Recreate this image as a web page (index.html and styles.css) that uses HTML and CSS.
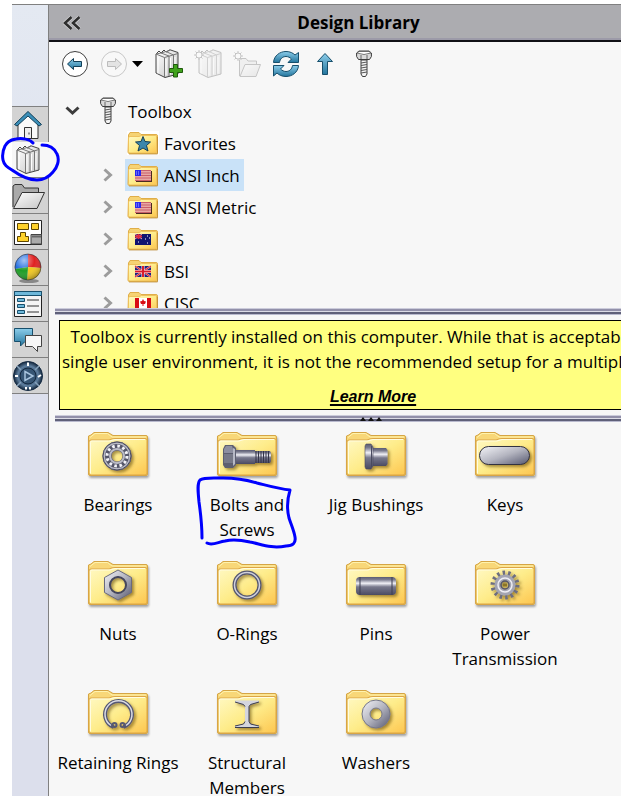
FILE: index.html
```html
<!DOCTYPE html>
<html lang="en">
<head>
    <meta charset="UTF-8">
    <meta name="viewport" content="width=device-width, initial-scale=1.0">
    <title>Design Library</title>
    <link rel="stylesheet" href="styles.css">
</head>
<body>
    <!-- shared shapes and gradients -->
    <svg class="sprite" width="0" height="0" aria-hidden="true">
        <defs>
            <linearGradient id="gold" x1="0" y1="0" x2="1" y2="1">
                <stop offset="0" stop-color="#fff9c4"/>
                <stop offset="0.5" stop-color="#feec8a"/>
                <stop offset="1" stop-color="#fdc650"/>
            </linearGradient>
            <linearGradient id="steel" x1="0" y1="0" x2="0" y2="1">
                <stop offset="0" stop-color="#5b5c72"/>
                <stop offset="0.15" stop-color="#7c7d90"/>
                <stop offset="0.35" stop-color="#f0f0f6"/>
                <stop offset="0.55" stop-color="#77788c"/>
                <stop offset="1" stop-color="#4a4b62"/>
            </linearGradient>
            <linearGradient id="metal" x1="0" y1="0" x2="1" y2="1">
                <stop offset="0" stop-color="#f4f4f8"/>
                <stop offset="0.5" stop-color="#b4b5c0"/>
                <stop offset="1" stop-color="#55576f"/>
            </linearGradient>
            <linearGradient id="blue" x1="0" y1="0" x2="0" y2="1">
                <stop offset="0" stop-color="#8ccdea"/>
                <stop offset="1" stop-color="#23759d"/>
            </linearGradient>
            <linearGradient id="paper" x1="0" y1="0" x2="1" y2="1">
                <stop offset="0" stop-color="#ffffff"/>
                <stop offset="1" stop-color="#c4c4c4"/>
            </linearGradient>
            <radialGradient id="disc">
                <stop offset="0.4" stop-color="#2b4764"/>
                <stop offset="0.7" stop-color="#5f7f9f"/>
                <stop offset="1" stop-color="#12263c"/>
            </radialGradient>
            <radialGradient id="shine" cx="0.35" cy="0.25" r="0.8">
                <stop offset="0" stop-color="#fff" stop-opacity="0.6"/>
                <stop offset="0.5" stop-color="#fff" stop-opacity="0"/>
                <stop offset="1" stop-color="#000" stop-opacity="0.35"/>
            </radialGradient>
            <filter id="drop" x="-20%" y="-20%" width="150%" height="150%">
                <feDropShadow dx="2" dy="2" stdDeviation="1.5" flood-color="#5a3c00" flood-opacity="0.55"/>
            </filter>
            <filter id="soft" x="-10%" y="-10%" width="125%" height="130%">
                <feDropShadow dx="1" dy="2" stdDeviation="1" flood-color="#000" flood-opacity="0.35"/>
            </filter>
        </defs>
        <symbol id="folder" viewBox="0 0 66 52">
            <g filter="url(#soft)">
                <path d="M3.500 9L3.500 6L6 5L9 2.500H23L28 5.500H61Q62.500 5.500 62.500 7V44Q62.500 45.500 61 45.500H5Q3.500 45.500 3.500 44Z" fill="#f8d778" stroke="#d5a544"/>
                <path d="M5 7.500L10 3.500H22.500L27 7H61" fill="none" stroke="#fff3ae"/>
                <path d="M4 12Q4 10 6 10H24Q27 8.500 30 8.500H60Q62 8.500 62 10V43Q62 45 60 45H6Q4 45 4 43Z" fill="url(#gold)" stroke="#dca544"/>
                <path d="M5.500 43.500V12.500Q5.500 11 7 11H25L30 9.500H60" fill="none" stroke="#fffce0"/>
            </g>
        </symbol>
        <symbol id="mini-folder" viewBox="0 0 32 24">
            <path d="M1.500 4L3 1.500H12L14 3.500H29Q30.500 3.500 30.500 5V21Q30.500 22.500 29 22.500H2.500Q1 22.500 1 21Z" fill="#f6d373" stroke="#e0ae48"/>
            <path d="M1.500 7Q1.500 5.500 3 5.500H12L14.500 4.500H28.500Q29.500 4.500 29.500 6V20.500Q29.500 22 28 22H3Q1.500 22 1.500 20.500Z" fill="url(#gold)" stroke="#eec15c"/>
            <path d="M2 23H30.500V6" fill="none" stroke="#b98830" stroke-opacity="0.7"/>
        </symbol>
        <symbol id="us-flag" viewBox="0 0 17 12">
            <path d="M1 1H17V12H1Z" fill="#4a2a20"/>
            <path d="M0 0H16V11H0Z" fill="#e8a8a4"/>
            <path d="M0 .5H16M0 3H16M0 5.500H16M0 8H16M0 10.500H16" stroke="#c8606a" stroke-width="1.200"/>
            <path d="M0 0H6V6H0Z" fill="#2a2af0"/>
            <path d="M1 2H5M1 4H5" stroke="#a5b0ff" stroke-dasharray="1 1"/>
        </symbol>
        <symbol id="bolt" viewBox="0 0 16 28">
            <path d="M5 10V24L6.500 26.500H9.500L11 24V10Z" fill="#f4f4f4" stroke="#3c3c3c"/>
            <path d="M5 13L11 12M5 15.500L11 14.500M5 18L11 17M5 20.500L11 19.500M5 23L11 22" stroke="#555"/>
            <path d="M.6 3V6.500L2.500 9.500H13.500L15.400 6.500V3L13 1H3Z" fill="#d9d9d9" stroke="#3c3c3c"/>
            <path d="M1 3Q8 6 15 3L13 1.500H3Z" fill="#fff" stroke="#555" stroke-width=".8"/>
            <path d="M5 5V9M11 5V9" stroke="#666"/>
        </symbol>
        <symbol id="books" viewBox="0 0 24 29">
            <path d="M1 5L4 2L6 4L9 1L11 3L15 0.800L23 3.500V25L10 28.500L1 24Z" fill="url(#paper)" stroke="#444"/>
            <path d="M1 5L9.500 8.500L23 4.500M9.500 8.500V28M14 7V27M18.500 6V26M1 5L6 4L14 7M6 4L11 2.500L18.500 6M11 3L15 1" fill="none" stroke="#777"/>
            <path d="M3 8V24.500M11 10V26.500M15.500 9V25.500M20 8V24.500" stroke="#fff"/>
        </symbol>
        <symbol id="chevron" viewBox="0 0 10 14">
            <path d="M1.500 1.500L7.500 7L1.500 12.500" fill="none" stroke="#9c9c9c" stroke-width="3"/>
        </symbol>
    </svg>

    <div class="app">
        <nav class="sidebar" aria-label="Task pane">
            <button class="tab" aria-label="Home">
                <svg width="32" height="32" viewBox="0 0 32 32">
                    <path d="M6 14L16 5L26 14V29.500H6Z" fill="#fafafa" stroke="#333"/>
                    <path d="M2.500 15.500L16 2.500L29.500 15.500L27 17L16 7L5 17Z" fill="#3b8fb8" stroke="#123f58"/>
                    <path d="M12.500 29V18.500H19.500V29" fill="#eee" stroke="#333"/>
                    <path d="M17 23.500V25.500" stroke="#333"/>
                </svg>
            </button>
            <button class="tab active" aria-label="Design Library">
                <svg width="24" height="29"><use href="#books"/></svg>
                <svg class="pen pen-tab" viewBox="0 0 62 46">
                    <path d="M33 6C30 2 22 1 16 2C9 3 7 6 5 9C3 13 2 18 3 23C4 28 7 30 12 33C19 38 29 43 37 43C43 43 48 41 53 35C57 31 60 23 57 17C54 10 49 8 42 8"/>
                </svg>
            </button>
            <button class="tab" aria-label="File Explorer">
                <svg width="34" height="32" viewBox="0 0 34 32">
                    <path d="M1 27V6L3 4.500H10L12.500 8H26.500V12" fill="#aaa" stroke="#333"/>
                    <path d="M1.500 28.500L10 12.500H32.500L25 28.500Z" fill="url(#paper)" stroke="#333"/>
                </svg>
            </button>
            <button class="tab" aria-label="View Palette">
                <svg width="32" height="32" viewBox="0 0 32 32">
                    <path d="M2.500 4.500H29.500V28.500H2.500Z" fill="#fff" stroke="#222"/>
                    <path d="M5.500 7.500H16.500V13.500H5.500ZM19.500 7.500H26.500V13.500H19.500ZM8.500 16.500H13.500V20.500H16.500V25.500H5.500V20.500H8.500Z" fill="#ffd22b" stroke="#5f4700"/>
                    <path d="M19 28V18.500H29.500V28Z" fill="#aaa" stroke="#444"/>
                    <path d="M20 19.500H29V21.500H20Z" fill="#666"/>
                </svg>
            </button>
            <button class="tab" aria-label="Appearances">
                <svg width="32" height="32" viewBox="0 0 32 32">
                    <ellipse cx="17" cy="29" rx="10" ry="2" fill="#888"/>
                    <path d="M16 15V2A13 13 0 0 0 3 17Z" fill="#1f6be0"/>
                    <path d="M16 15V2A13 13 0 0 1 29 16Z" fill="#e02222"/>
                    <path d="M16 15L29 16A13 13 0 0 1 15 28Z" fill="#f2c81e"/>
                    <path d="M16 15L3 17A13 13 0 0 0 15 28Z" fill="#1f9e26"/>
                    <circle cx="16" cy="15" r="13" fill="url(#shine)" stroke="#333" stroke-width=".6"/>
                </svg>
            </button>
            <button class="tab" aria-label="Custom Properties">
                <svg width="32" height="32" viewBox="0 0 32 32">
                    <path d="M2.500 3.500H29.500V28.500H2.500Z" fill="#f5f5f5" stroke="#222"/>
                    <path d="M2.500 3.500H29.500V7.500H2.500Z" fill="#6eb8da" stroke="#174f6c"/>
                    <path d="M5.500 10.500H12.500V13.500H5.500ZM5.500 16.500H12.500V19.500H5.500ZM5.500 22.500H12.500V25.500H5.500Z" fill="#6eb8da" stroke="#174f6c"/>
                    <path d="M15 12H27M15 18H27M15 24H27" stroke="#333"/>
                </svg>
            </button>
            <button class="tab" aria-label="Forum">
                <svg width="32" height="32" viewBox="0 0 32 32">
                    <path d="M2.500 4.500H20.500V17.500H13L8.500 22V17.500H2.500Z" fill="url(#blue)" stroke="#174f6c"/>
                    <path d="M13.500 11.500H29.500V22.500H25.500V27.500L20.500 22.500H13.500Z" fill="#f7f7f7" stroke="#444"/>
                </svg>
            </button>
            <button class="tab" aria-label="Recovery">
                <svg width="32" height="32" viewBox="0 0 32 32">
                    <circle cx="16" cy="16" r="14.500" fill="url(#disc)" stroke="#172c44"/>
                    <path d="M5 6L9 10M27 6L23 10M5 26L9 22M27 26L23 22" stroke="#86a2bc" stroke-width="1.500"/>
                    <circle cx="16" cy="16" r="8" fill="#365574" stroke="#142940"/>
                    <path d="M13 11.500L21 16L13 20.500Z" fill="none" stroke="#a8c4de" stroke-width="1.500"/>
                    <path d="M16 2.500V6M3 16H6M26 17L29 15M14 27V29.500M18 27V29.500" stroke="#fff" stroke-width="2"/>
                </svg>
            </button>
        </nav>

        <main class="panel">
            <header class="title-bar">
                <button class="collapse" aria-label="Collapse">
                    <svg width="18" height="14" viewBox="0 0 18 14">
                        <path d="M8.500 1L2 7L8.500 13M16.500 1L10 7L16.500 13" fill="none" stroke="#fff" stroke-opacity=".5" stroke-width="4"/>
                        <path d="M8.500 1L2 7L8.500 13M16.500 1L10 7L16.500 13" fill="none" stroke="#2e2e2e" stroke-width="2.600"/>
                    </svg>
                </button>
                <h1>Design Library</h1>
            </header>

            <div class="toolbar">
                <button aria-label="Back">
                    <svg width="28" height="28" viewBox="0 0 28 28">
                        <circle cx="14" cy="14" r="12.500" fill="#fff" stroke="#3f3f3f"/>
                        <path d="M6.500 14L12.500 8.500V11.500H20.500V16.500H12.500V19.500Z" fill="url(#blue)" stroke="#123f58"/>
                    </svg>
                </button>
                <div class="forward">
                    <button aria-label="Forward" disabled>
                        <svg width="28" height="28" viewBox="0 0 28 28">
                            <circle cx="14" cy="14" r="12.500" fill="#f8f8f8" stroke="#c8c8c8"/>
                            <path d="M21.500 14L15.500 8.500V11.500H7.500V16.500H15.500V19.500Z" fill="#e4e4e4" stroke="#bcbcbc"/>
                        </svg>
                    </button>
                    <button aria-label="History">
                        <svg width="13" height="28" viewBox="0 0 13 28"><path d="M1 11H12L6.500 17Z" fill="#000"/></svg>
                    </button>
                </div>
                <button aria-label="Add to Library">
                    <svg width="28" height="30" viewBox="0 0 28 30">
                        <use href="#books" width="24" height="29"/>
                        <path d="M18.500 15.500H22.500V19.500H27.500V23.500H22.500V28H18.500V23.500H14.500V19.500H18.500Z" fill="#40a21c" stroke="#1f5a0c"/>
                    </svg>
                </button>
                <button aria-label="Add File Location" disabled>
                    <svg class="faded" width="28" height="30" viewBox="0 0 28 30">
                        <use href="#books" x="4" width="24" height="29"/>
                        <circle cx="5" cy="6" r="3" fill="#fff" stroke="#555"/>
                        <path d="M5 1V3M5 9V11M0 6H2M8 6H10M1.500 2.500L3 4M7 8L8.500 9.500M1.500 9.500L3 8M7 4L8.500 2.500" stroke="#555"/>
                    </svg>
                </button>
                <button aria-label="Create New Folder" disabled>
                    <svg class="faded" width="28" height="30" viewBox="0 0 28 30">
                        <path d="M6.500 27V11L8 9.500H13L15 12H23.500V15" fill="#ddd" stroke="#555"/>
                        <path d="M7 27.500L12 15.500H27.500L23 27.500Z" fill="url(#paper)" stroke="#555"/>
                        <circle cx="5" cy="7" r="3" fill="#fff" stroke="#555"/>
                        <path d="M5 2V4M5 10V12M0 7H2M8 7H10M1.500 3.500L3 5M7 9L8.500 10.500M1.500 10.500L3 9M7 5L8.500 3.500" stroke="#555"/>
                    </svg>
                </button>
                <button aria-label="Refresh">
                    <svg width="28" height="28" viewBox="0 0 28 28">
                        <path d="M1.500 12.500C2 5.500 8 1.500 14 1.500C18 1.500 21 3 23 5L26.500 2.500V12.500H16L19.500 9C18 7.500 16 6.500 14 6.500C11 6.500 8 8.500 7.500 12.500Z" fill="url(#blue)" stroke="#174f6c"/>
                        <path d="M26.500 15.500C26 22.500 20 26.500 14 26.500C10 26.500 7 25 5 23L1.500 26V15.500H12L8.500 19C10 20.500 12 21.500 14 21.500C17 21.500 20 19.500 20.500 15.500Z" fill="url(#blue)" stroke="#174f6c"/>
                    </svg>
                </button>
                <button aria-label="Up One Level">
                    <svg width="28" height="28" viewBox="0 0 28 28">
                        <path d="M14 3.500L21.500 11.500H16.500V24.500H11.500V11.500H6.500Z" fill="url(#blue)" stroke="#174f6c"/>
                    </svg>
                </button>
                <button aria-label="Configure Toolbox">
                    <svg width="28" height="28"><use href="#bolt"/></svg>
                </button>
            </div>

            <div class="tree">
                <button class="node root" aria-expanded="true">
                    <svg width="15" height="10" viewBox="0 0 15 10"><path d="M1.500 1.500L7.500 7L13.500 1.500" fill="none" stroke="#3c3c3c" stroke-width="3"/></svg>
                    <svg width="16" height="28"><use href="#bolt"/></svg>
                    <span>Toolbox</span>
                </button>
                <ul>
                    <li>
                        <span class="arrow"></span>
                        <button class="node">
                            <svg class="on-white" width="32" height="24" viewBox="0 0 32 24">
                                <use href="#mini-folder"/>
                                <path d="M16 5.500L18 10.500L23.500 11L19.500 14.500L21 20L16 17L11 20L12.500 14.500L8.500 11L14 10.500Z" fill="#3d87ab" stroke="#153f57"/>
                            </svg>
                            <span>Favorites</span>
                        </button>
                    </li>
                    <li>
                        <span class="arrow"><svg width="10" height="14"><use href="#chevron"/></svg></span>
                        <button class="node selected">
                            <svg width="32" height="24" viewBox="0 0 32 24">
                                <use href="#mini-folder"/>
                                <use href="#us-flag" x="8" y="7" width="17" height="12"/>
                            </svg>
                            <span>ANSI Inch</span>
                        </button>
                    </li>
                    <li>
                        <span class="arrow"><svg width="10" height="14"><use href="#chevron"/></svg></span>
                        <button class="node">
                            <svg width="32" height="24" viewBox="0 0 32 24">
                                <use href="#mini-folder"/>
                                <use href="#us-flag" x="8" y="7" width="17" height="12"/>
                            </svg>
                            <span>ANSI Metric</span>
                        </button>
                    </li>
                    <li>
                        <span class="arrow"><svg width="10" height="14"><use href="#chevron"/></svg></span>
                        <button class="node">
                            <svg width="32" height="24" viewBox="0 0 32 24">
                                <use href="#mini-folder"/>
                                <path d="M8 7H24V18H8Z" fill="#101470"/>
                                <path d="M8 7L15 12M15 7L8 12" stroke="#f6a8b0"/>
                                <path d="M8 9.500H15M11.500 7V12" stroke="#e02840" stroke-width="2"/>
                                <path d="M11 15H12M20 9H21M18 12H19M22 11H23M20 16H21" stroke="#fff"/>
                            </svg>
                            <span>AS</span>
                        </button>
                    </li>
                    <li>
                        <span class="arrow"><svg width="10" height="14"><use href="#chevron"/></svg></span>
                        <button class="node">
                            <svg width="32" height="24" viewBox="0 0 32 24">
                                <use href="#mini-folder"/>
                                <path d="M8 7H24V18H8Z" fill="#1a2280"/>
                                <path d="M8 7L24 18M24 7L8 18" stroke="#f0b0b4" stroke-width="2"/>
                                <path d="M8 7L24 18M24 7L8 18" stroke="#d81c2c"/>
                                <path d="M8 12.500H24M16 7V18" stroke="#fff" stroke-width="3"/>
                                <path d="M8 12.500H24M16 7V18" stroke="#d81c2c" stroke-width="2"/>
                            </svg>
                            <span>BSI</span>
                        </button>
                    </li>
                    <li>
                        <span class="arrow"><svg width="10" height="14"><use href="#chevron"/></svg></span>
                        <button class="node">
                            <svg width="32" height="24" viewBox="0 0 32 24">
                                <use href="#mini-folder"/>
                                <path d="M8 7H24V18H8Z" fill="#d80c14"/>
                                <path d="M12 7H20V18H12Z" fill="#fff"/>
                                <path d="M16 8L17 10L19 10.500L18 13H16.500V15H15.500V13H14L13 10.500L15 10Z" fill="#d80c14"/>
                            </svg>
                            <span>CISC</span>
                        </button>
                    </li>
                </ul>
            </div>

            <div class="splitter"></div>
            <section class="notice">
                <div class="notice-text">
                    <p>Toolbox is currently installed on this computer. While that is acceptable for a<br>
                    single user environment, it is not the recommended setup for a multiple users.</p>
                    <a href="#">Learn More</a>
                </div>
            </section>
            <div class="splitter grip">
                <svg width="22" height="4" viewBox="0 0 22 4"><path d="M0 4L3 0L6 4ZM8 4L11 0L14 4ZM16 4L19 0L22 4Z" fill="#111"/></svg>
            </div>

            <section class="library">
                <button class="item">
                    <svg width="66" height="52" viewBox="0 0 66 52">
                        <use href="#folder"/>
                        <g filter="url(#drop)" fill="none">
                            <circle cx="32" cy="26" r="10" stroke="#55566a" stroke-width="9"/>
                            <circle cx="32" cy="26" r="13" stroke="#b9bac6" stroke-width="2"/>
                            <circle cx="32" cy="26" r="10" stroke="#f4f4f8" stroke-width="3" stroke-dasharray="2.600 2.636"/>
                            <circle cx="32" cy="26" r="7" stroke="#b9bac6" stroke-width="2"/>
                            <circle cx="32" cy="26" r="14" stroke="#4b4c60"/>
                        </g>
                    </svg>
                    <span>Bearings</span>
                </button>
                <button class="item">
                    <svg width="66" height="52" viewBox="0 0 66 52">
                        <use href="#folder"/>
                        <g filter="url(#drop)">
                            <path d="M21 20H41V34H21Z" fill="url(#steel)"/>
                            <path d="M41 21H56L57 23V31L56 33H41Z" fill="url(#steel)"/>
                            <path d="M42 21V33M44.500 21V33M47 21V33M49.500 21V33M52 21V33M54.500 21V33" stroke="#34354a"/>
                            <path d="M9 19L11 15H19L22 18V35L19 38H11L9 35Z" fill="#5d5f70"/>
                            <path d="M10 19L12 16H18L19 19V23H10Z" fill="#8d8fa0"/>
                            <path d="M10 24H19V33H10Z" fill="#777988"/>
                            <path d="M19 18L21 19V34L19 36Z" fill="#b7b9c6"/>
                        </g>
                    </svg>
                    <span>Bolts and Screws</span>
                    <svg class="pen pen-item" viewBox="0 0 104 76">
                        <path d="M7 64C7 50 6 42 4 28C3 18 2 9 5 6C9 3 17 4 28 4C40 4 52 6 62 9C74 12 84 15 95 16C92 26 92 36 94 44C97 53 99 57 100 63C101 69 98 72 91 72C76 75 66 70 55 68C46 66 38 65 30 67C23 68 17 72 12 69"/>
                    </svg>
                </button>
                <button class="item">
                    <svg width="66" height="52" viewBox="0 0 66 52">
                        <use href="#folder"/>
                        <g filter="url(#drop)">
                            <path d="M28 18H43L44.500 20V34L43 36H28Z" fill="url(#steel)"/>
                            <path d="M23 14H28L30 17V36L28 39H23L22 37V16Z" fill="url(#steel)" stroke="#4a4b60" stroke-width=".6"/>
                            <path d="M28.500 16V37" stroke="#4a4b60"/>
                        </g>
                    </svg>
                    <span>Jig Bushings</span>
                </button>
                <button class="item">
                    <svg width="66" height="52" viewBox="0 0 66 52">
                        <use href="#folder"/>
                        <rect x="7.500" y="16.500" width="50" height="18" rx="9" fill="url(#metal)" stroke="#30313f" filter="url(#drop)"/>
                    </svg>
                    <span>Keys</span>
                </button>
                <button class="item">
                    <svg width="66" height="52" viewBox="0 0 66 52">
                        <use href="#folder"/>
                        <g filter="url(#drop)">
                            <path d="M33 11L46.500 18.500V33.500L33 41L19.500 33.500V18.500ZM33 18A8 8 0 1 0 33 34A8 8 0 1 0 33 18Z" fill="url(#metal)" fill-rule="evenodd" stroke="#6a6b7e"/>
                            <circle cx="33" cy="26" r="8" fill="none" stroke="#45465c" stroke-width="2"/>
                        </g>
                    </svg>
                    <span>Nuts</span>
                </button>
                <button class="item">
                    <svg width="66" height="52" viewBox="0 0 66 52">
                        <use href="#folder"/>
                        <g fill="none" filter="url(#drop)">
                            <circle cx="33" cy="26" r="12.500" stroke="#54566e" stroke-width="4"/>
                            <circle cx="33" cy="26" r="12.500" stroke="#cfd0dc" stroke-width="1.500"/>
                        </g>
                    </svg>
                    <span>O-Rings</span>
                </button>
                <button class="item">
                    <svg width="66" height="52" viewBox="0 0 66 52">
                        <use href="#folder"/>
                        <g filter="url(#drop)">
                            <rect x="13" y="18" width="40" height="18" rx="4" fill="url(#steel)"/>
                            <path d="M17 18V36M49 18V36" stroke="#3d3e52"/>
                        </g>
                    </svg>
                    <span>Pins</span>
                </button>
                <button class="item">
                    <svg width="66" height="52" viewBox="0 0 66 52">
                        <use href="#folder"/>
                        <g fill="none" filter="url(#drop)">
                            <circle cx="33" cy="26" r="12" stroke="#6d6e80" stroke-width="5" stroke-dasharray="2.400 2.984"/>
                            <circle cx="33" cy="26" r="7.500" stroke="#a4a5b2" stroke-width="6"/>
                            <circle cx="33" cy="26" r="7" stroke="#eeeef4" stroke-width="1.500"/>
                            <circle cx="33" cy="26" r="4" stroke="#55566a" stroke-width="1.500"/>
                            <path d="M31 26H35" stroke="#8c7428" stroke-width="3"/>
                        </g>
                    </svg>
                    <span>Power Transmission</span>
                </button>
                <button class="item">
                    <svg width="66" height="52" viewBox="0 0 66 52">
                        <use href="#folder"/>
                        <g fill="none" filter="url(#drop)">
                            <path d="M28.500 39A13.500 13.500 0 1 1 38.500 39" stroke="#565872" stroke-width="4"/>
                            <path d="M26 37.500A13.500 13.500 0 1 1 41 37.500" stroke="#dcdde6" stroke-width="1.500"/>
                            <circle cx="29.500" cy="37" r="2" stroke="#565872" stroke-width="2"/>
                            <circle cx="37.500" cy="37" r="2" stroke="#565872" stroke-width="2"/>
                        </g>
                    </svg>
                    <span>Retaining Rings</span>
                </button>
                <button class="item">
                    <svg width="66" height="52" viewBox="0 0 66 52">
                        <use href="#folder"/>
                        <g filter="url(#drop)">
                            <path d="M21 12.500H45V14L36.500 16.500L35 18.500V33.500L36.500 36L45 38V39.500H21V38L29.500 36L31 33.500V18.500L29.500 16.500L21 14Z" fill="#d4d5de"/>
                            <path d="M45 14L36.500 16.500L35 18.500V33.500L36.500 36L45 38M21 39.500H45M21 14L29.500 16.500L31 18.500M21 38L29.500 36L31 33.500" fill="none" stroke="#3b3c50"/>
                        </g>
                    </svg>
                    <span>Structural Members</span>
                </button>
                <button class="item">
                    <svg width="66" height="52" viewBox="0 0 66 52">
                        <use href="#folder"/>
                        <path d="M33 12A14 14 0 1 0 33 40A14 14 0 1 0 33 12ZM33 20A6 6 0 1 1 33 32A6 6 0 1 1 33 20Z" fill="url(#metal)" fill-rule="evenodd" stroke="#777889" filter="url(#drop)"/>
                    </svg>
                    <span>Washers</span>
                </button>
            </section>
        </main>
    </div>
</body>
</html>
```
FILE: styles.css
```css
* {
    box-sizing: border-box;
    margin: 0;
    padding: 0;
}

body {
    font-family: 'Segoe UI', 'Open Sans', 'Noto Sans', sans-serif;
    font-size: 17px;
    line-height: 25px;
    color: #000;
    background-color: #fff;
}

button {
    border: none;
    background: none;
    font: inherit;
    color: inherit;
    cursor: pointer;
}

svg {
    display: block;
    flex-shrink: 0;
}

.sprite {
    position: absolute;
}

.app {
    display: flex;
    height: 100vh;
    padding: 4px 0 0 12px;
    overflow: hidden;
}

.sidebar {
    width: 37px;
    flex-shrink: 0;
    padding-top: 101px;
    border-top: 1px solid #808080;
    border-right: 1px solid #808080;
    background: linear-gradient(#e4e9f2, #dcdfec 50%);
}

.tab {
    position: relative;
    display: flex;
    align-items: center;
    width: 36px;
    height: 36px;
    border-bottom: 1px solid #808080;
    background-color: #d3d3d3;
}

.tab:first-child {
    border-top: 1px solid #808080;
    border-bottom: none;
}

.tab.active {
    width: 37px;
    padding-left: 4px;
    background-color: #f7f7f7;
}

/* hand-drawn marks */
.pen {
    position: absolute;
    fill: none;
    stroke: #0000fe;
    stroke-width: 3px;
    stroke-linecap: round;
    stroke-linejoin: round;
    pointer-events: none;
}

.pen-tab {
    top: -5px;
    left: -12px;
    width: 62px;
    height: 46px;
    z-index: 1;
}

.pen-item {
    top: 44px;
    left: 12px;
    width: 104px;
    height: 76px;
}

.panel {
    flex: 1;
    min-width: 0;
    display: flex;
    flex-direction: column;
    background-color: #f7f7f7;
}

.title-bar {
    display: flex;
    align-items: center;
    height: 38px;
    flex-shrink: 0;
    border-top: 1px solid #808080;
    border-bottom: 2px solid #111116;
    background-color: #acacb0;
    box-shadow: inset 0 -2px #9c9aa8;
}

.collapse {
    width: 47px;
    padding-left: 14px;
}

h1 {
    flex: 1;
    text-align: center;
    font-size: 17px;
    font-weight: bold;
}

.toolbar {
    display: flex;
    align-items: center;
    gap: 11px;
    height: 44px;
    flex-shrink: 0;
    padding-left: 12px;
}

.forward {
    display: flex;
    gap: 3px;
}

.faded {
    opacity: 0.3;
}

.tree {
    height: 222px;
    flex-shrink: 0;
    padding-top: 9px;
    overflow: hidden;
}

.tree ul {
    list-style: none;
}

.tree li {
    display: flex;
    align-items: center;
    padding-left: 54px;
}

.arrow {
    width: 22px;
}

.node {
    display: flex;
    align-items: center;
    gap: 5px;
    height: 32px;
    padding: 0 4px 0 2px;
}

.root {
    gap: 12px;
    padding-left: 16px;
}

.root svg:first-child {
    margin-right: 8px;
}

.on-white {
    background-color: #fff;
}

.selected {
    background-color: #c9e2f8;
}

.splitter {
    display: flex;
    justify-content: center;
    height: 7px;
    flex-shrink: 0;
    margin-left: 6px;
    background: linear-gradient(#ccccdb 1px, #9290aa 1px 3px, #dcdce6 3px 4px, #5f6079 4px 6px, #b9bace 6px);
}

.grip {
    padding: 2px 0 0 66px;
}

.notice {
    flex-shrink: 0;
    margin: 5px 0 5px 10px;
    border: 1px solid #000;
    border-right: none;
    background-color: #ffff80;
    overflow: hidden;
}

.notice-text {
    width: max-content;
    padding: 3px 2px 0;
    text-align: center;
    white-space: nowrap;
}

.notice a {
    display: inline-block;
    padding: 10px 0 0;
    font-family: 'Liberation Sans', Arial, sans-serif;
    font-size: 16px;
    font-weight: bold;
    font-style: italic;
    color: #000;
    text-decoration-thickness: 2px;
    text-underline-offset: 2px;
}

.library {
    display: grid;
    grid-template-columns: repeat(auto-fill, 129px);
    grid-auto-rows: 129px;
    padding: 8px 0 0 5px;
}

.item {
    position: relative;
    display: flex;
    flex-direction: column;
    align-items: center;
    gap: 10px;
    padding-right: 1px;
}
```
